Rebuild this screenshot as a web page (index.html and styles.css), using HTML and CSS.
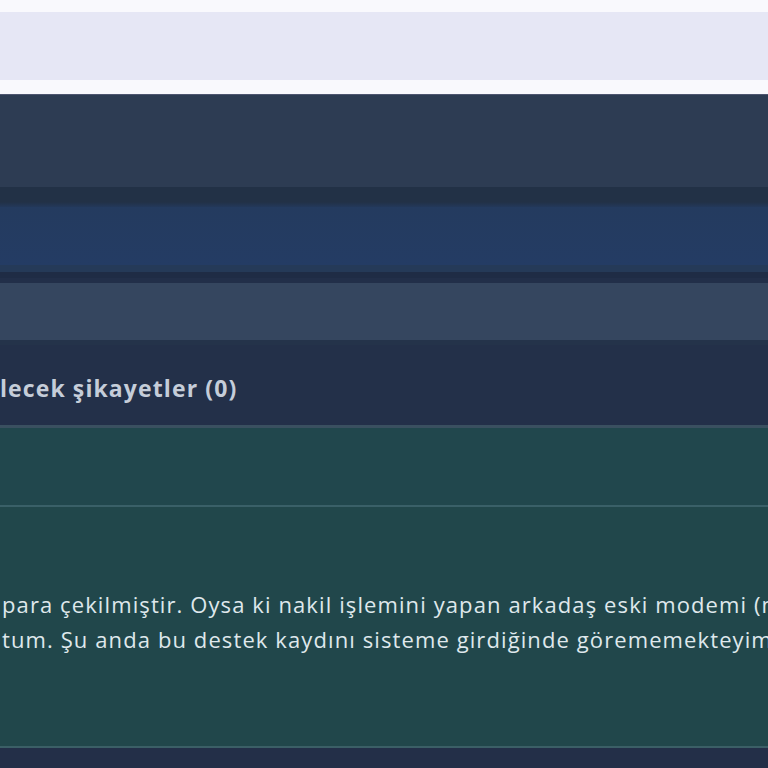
FILE: index.html
```html
<!DOCTYPE html>
<html lang="tr">
<head>
<meta charset="utf-8">
<title>Şikayetler</title>
<link rel="stylesheet" href="styles.css">
</head>
<body>
<div class="page">
  <div class="top-gap"></div>
  <div class="search-bar"></div>
  <div class="bottom-gap"></div>
  <div class="nav-main"></div>
  <div class="nav-shadow"></div>
  <div class="nav-active"></div>
  <div class="nav-strip">
    <div class="strip-a"></div>
    <div class="strip-b"></div>
    <div class="strip-c"></div>
  </div>
  <div class="nav-sub"></div>
  <div class="section-head">
    <h2 class="section-title">lecek şikayetler (0)</h2>
  </div>
  <div class="item-head"></div>
  <div class="item-body">
    <p class="item-text">para çekilmiştir. Oysa ki nakil işlemini yapan arkadaş eski modemi (modemi</p>
    <p class="item-text">tum. Şu anda bu destek kaydını sisteme girdiğinde görememekteyim.</p>
  </div>
  <div class="footer-row"></div>
</div>
</body>
</html>
```

FILE: styles.css
```css
html, body {
  margin: 0;
  padding: 0;
  background: #232f48;
}
.page {
  width: 768px;
  height: 768px;
  overflow: hidden;
  display: flex;
  flex-direction: column;
  font-family: "Open Sans", "Noto Sans", "DejaVu Sans", sans-serif;
}
.top-gap {
  height: 12px;
  background: #f9f9fd;
  flex: none;
}
.search-bar {
  height: 68px;
  background: #e6e7f5;
  flex: none;
}
.bottom-gap {
  height: 14px;
  background: #f9f9fd;
  border-bottom: 1px solid #4e5670;
  flex: none;
}
.nav-main {
  height: 92px;
  background: #2d3c53;
  flex: none;
}
.nav-shadow {
  height: 20px;
  background: linear-gradient(#223146 0, #223146 15px, #23385a 20px);
  flex: none;
}
.nav-active {
  height: 58px;
  background: linear-gradient(#243b5f, #243c64);
  flex: none;
}
.nav-strip {
  flex: none;
  display: flex;
  flex-direction: column;
}
.strip-a { height: 7px; background: #253a58; }
.strip-b { height: 6px; background: #1f2c45; }
.strip-c { height: 5px; background: #222f49; }
.nav-sub {
  height: 57px;
  background: #35465f;
  border-bottom: 5px solid #24334a;
  flex: none;
}
.section-head {
  height: 74px;
  padding-top: 6px;
  background: #233049;
  border-bottom: 3px solid #3a5060;
  display: flex;
  align-items: center;
  flex: none;
}
.section-title {
  margin: 0;
  padding-left: 0;
  font-size: 23px;
  font-weight: 700;
  letter-spacing: 1.1px;
  color: #c5cdd9;
  white-space: nowrap;
}
.item-head {
  height: 77px;
  background: #21474d;
  border-bottom: 2px solid #3a6068;
  flex: none;
}
.item-body {
  height: 241px;
  background: #21474b;
  border-bottom: 2px solid #3b5f66;
  padding-top: 80px;
  box-sizing: border-box;
  flex: none;
  overflow: hidden;
}
.item-text {
  margin: 0;
  padding-left: 2px;
  font-size: 22px;
  letter-spacing: 1.1px;
  line-height: 35px;
  color: #dfe8ec;
  white-space: nowrap;
}
.footer-row {
  flex: 1;
  background: #232f48;
}
```
